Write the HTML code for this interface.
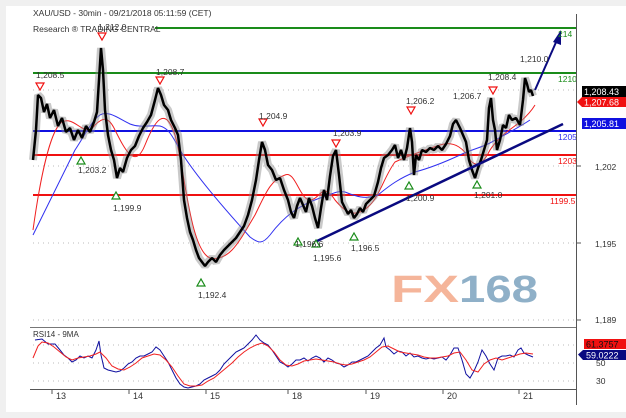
<!DOCTYPE html>
<html><head><meta charset="utf-8"><style>
html,body{margin:0;padding:0;background:#f0f0f0;}
svg{display:block;font-family:"Liberation Sans",sans-serif;}
</style></head><body>
<svg width="626" height="418" viewBox="0 0 626 418" xmlns="http://www.w3.org/2000/svg">
<rect x="6" y="6" width="620" height="406" fill="#fff"/>
<g stroke="#bbb" stroke-dasharray="1,4" stroke-width="1">
<line x1="33" y1="90" x2="576" y2="90"/><line x1="33" y1="166" x2="576" y2="166"/>
<line x1="33" y1="243" x2="576" y2="243"/><line x1="33" y1="320" x2="576" y2="320"/>
<line x1="33" y1="345" x2="576" y2="345"/><line x1="33" y1="363" x2="576" y2="363"/><line x1="33" y1="381" x2="576" y2="381"/>
</g>
<text x="391" y="302" font-size="38" font-weight="bold" fill="#f5b59a" textLength="68" lengthAdjust="spacingAndGlyphs">FX</text>
<text x="459" y="302" font-size="38" font-weight="bold" fill="#8fb0c8" textLength="79" lengthAdjust="spacingAndGlyphs">168</text>
<line x1="155" y1="28" x2="576" y2="28" stroke="#1a8c1a" stroke-width="2"/>
<line x1="33" y1="73" x2="576" y2="73" stroke="#1a8c1a" stroke-width="2"/>
<line x1="33" y1="131" x2="576" y2="131" stroke="#1010e0" stroke-width="2"/>
<line x1="33" y1="155" x2="576" y2="155" stroke="#f01010" stroke-width="2"/>
<line x1="33" y1="195" x2="576" y2="195" stroke="#f01010" stroke-width="2"/>
<path d="M33,230 C40,180 50,130 62,122 C75,115 85,140 95,125 C102,118 108,115 115,130 C125,150 135,170 145,145 C155,120 165,105 175,135 C185,170 190,250 210,258 C230,262 240,240 255,215 C265,195 270,180 285,175 C295,170 300,200 310,200 C320,200 322,180 335,200 C345,212 355,220 370,205 C380,195 385,175 395,162 C410,155 425,150 440,145 C455,140 465,150 470,160 C478,170 485,160 490,150 C500,135 510,130 520,122 C528,115 532,110 535,105" fill="none" stroke="#f02020" stroke-width="1"/>
<path d="M33,235 C50,200 65,170 75,150 C85,135 92,120 100,115 C108,110 118,118 130,124 C140,128 150,125 160,126 C168,128 172,135 180,150 C195,175 230,215 250,237 C258,243 262,245 270,235 C285,215 300,205 320,198 C330,196 335,190 345,192 C355,196 365,200 378,195 C390,185 400,178 415,172 C430,168 445,162 460,155 C470,150 480,148 490,143 C500,137 515,130 530,120" fill="none" stroke="#3030f0" stroke-width="1"/>
<g fill="none" stroke-linejoin="bevel">
<polyline id="p" stroke="#888" stroke-width="8" stroke-opacity="0.45" points="33,160 36,130 38,95 41,98 44,112 47,104 50,118 54,110 58,126 62,118 66,132 70,128 74,140 78,130 82,138 86,126 90,132 94,122 97,112 99,80 101,48 103,70 105,110 108,135 111,150 114,160 117,178 120,168 123,172 127,158 131,150 135,146 139,136 143,128 147,122 151,115 155,100 158,88 161,95 164,105 168,110 171,120 175,128 178,135 181,160 184,200 187,218 190,232 193,240 196,250 199,258 202,262 205,266 208,262 212,258 216,262 220,255 224,250 228,246 232,242 236,238 240,232 244,226 248,215 252,200 256,180 259,160 262,142 265,150 268,165 272,170 276,180 280,178 284,190 288,200 291,212 294,218 297,206 300,198 303,205 306,212 309,198 312,206 315,218 318,228 321,208 324,190 327,200 330,176 333,156 336,150 339,175 342,202 345,208 348,214 351,210 354,218 357,214 360,208 363,212 366,204 370,200 374,196 378,182 381,168 384,158 388,155 392,150 395,145 398,158 401,150 404,160 407,148 410,128 412,142 414,175 416,155 419,160 422,150 426,152 430,148 434,150 438,146 442,150 446,144 450,136 453,124 456,120 460,128 463,135 466,142 469,160 472,170 475,178 478,168 481,160 484,150 487,140 489,108 491,98 493,120 495,130 497,150 500,140 503,125 506,128 509,115 512,120 516,118 520,125 523,100 525,78 527,84 529,92 531,90 533,96"/>
<polyline stroke="#000" stroke-width="2.5" points="33,160 36,130 38,95 41,98 44,112 47,104 50,118 54,110 58,126 62,118 66,132 70,128 74,140 78,130 82,138 86,126 90,132 94,122 97,112 99,80 101,48 103,70 105,110 108,135 111,150 114,160 117,178 120,168 123,172 127,158 131,150 135,146 139,136 143,128 147,122 151,115 155,100 158,88 161,95 164,105 168,110 171,120 175,128 178,135 181,160 184,200 187,218 190,232 193,240 196,250 199,258 202,262 205,266 208,262 212,258 216,262 220,255 224,250 228,246 232,242 236,238 240,232 244,226 248,215 252,200 256,180 259,160 262,142 265,150 268,165 272,170 276,180 280,178 284,190 288,200 291,212 294,218 297,206 300,198 303,205 306,212 309,198 312,206 315,218 318,228 321,208 324,190 327,200 330,176 333,156 336,150 339,175 342,202 345,208 348,214 351,210 354,218 357,214 360,208 363,212 366,204 370,200 374,196 378,182 381,168 384,158 388,155 392,150 395,145 398,158 401,150 404,160 407,148 410,128 412,142 414,175 416,155 419,160 422,150 426,152 430,148 434,150 438,146 442,150 446,144 450,136 453,124 456,120 460,128 463,135 466,142 469,160 472,170 475,178 478,168 481,160 484,150 487,140 489,108 491,98 493,120 495,130 497,150 500,140 503,125 506,128 509,115 512,120 516,118 520,125 523,100 525,78 527,84 529,92 531,90 533,96"/>
</g>
<line x1="315" y1="242" x2="563" y2="124" stroke="#0a0a80" stroke-width="2.5"/>
<line x1="535" y1="90" x2="557" y2="40" stroke="#0a0a80" stroke-width="2"/>
<polygon points="561,30 553,42 561,45" fill="#0a0a80"/>
<g fill="#fff" stroke="#f01010" stroke-width="1.2">
<polygon points="36,83 44,83 40,90"/><polygon points="98,33 106,33 102,40"/><polygon points="156,77 164,77 160,84"/>
<polygon points="259,119 267,119 263,126"/><polygon points="332,140 340,140 336,147"/><polygon points="407,107 415,107 411,114"/>
<polygon points="489,87 497,87 493,94"/>
</g>
<g fill="#fff" stroke="#1a8c1a" stroke-width="1.2">
<polygon points="77,164 85,164 81,157"/><polygon points="112,199 120,199 116,192"/><polygon points="197,286 205,286 201,279"/>
<polygon points="294,245 302,245 298,238"/><polygon points="312,247 320,247 316,240"/><polygon points="350,240 358,240 354,233"/>
<polygon points="405,189 413,189 409,182"/><polygon points="473,188 481,188 477,181"/>
</g>
<g font-size="8.5" fill="#333">
<text x="36" y="78">1,208.5</text><text x="98" y="30">1,212.0</text><text x="156" y="75">1,208.7</text>
<text x="259" y="119">1,204.9</text><text x="333" y="136">1,203.9</text><text x="406" y="104">1,206.2</text>
<text x="453" y="99">1,206.7</text><text x="488" y="80">1,208.4</text><text x="520" y="62">1,210.0</text>
<text x="78" y="173">1,203.2</text><text x="113" y="211">1,199.9</text><text x="198" y="298">1,192.4</text>
<text x="295" y="247">1,196.6</text><text x="313" y="261">1,195.6</text><text x="351" y="251">1,196.5</text>
<text x="406" y="201">1,200.9</text><text x="474" y="198">1,201.0</text>
</g>
<text x="33" y="16" font-size="8.5" fill="#333">XAU/USD - 30min - 09/21/2018 05:11:59 (CET)</text>
<text x="33" y="32" font-size="8.5" fill="#333">Research ® TRADING CENTRAL</text>
<g font-size="8.5">
<text x="558" y="37" fill="#1a8c1a">214</text><text x="558" y="82" fill="#1a8c1a">1210</text>
<text x="558" y="140" fill="#3030f0">1205</text><text x="558" y="164" fill="#f01010">1203</text>
<text x="550" y="204" fill="#f01010">1199.5</text>
<text x="595" y="170" fill="#333">1,202</text><text x="595" y="247" fill="#333">1,195</text><text x="595" y="323" fill="#333">1,189</text>
</g>
<rect x="582" y="86" width="44" height="11" fill="#000"/><text x="584" y="95" font-size="9" fill="#fff">1,208.43</text>
<polygon points="577,102 582,97 626,97 626,107 582,107" fill="#f01010"/><text x="584" y="105.5" font-size="9" fill="#fff">1,207.68</text>
<rect x="582" y="118" width="44" height="11" fill="#1010e0"/><text x="584" y="127" font-size="9" fill="#fff">1,205.81</text>
<line x1="576.5" y1="14" x2="576.5" y2="405" stroke="#555" stroke-width="1"/>
<line x1="30" y1="327.5" x2="576" y2="327.5" stroke="#777" stroke-width="1"/>
<line x1="30" y1="389.5" x2="576" y2="389.5" stroke="#555" stroke-width="1"/>
<g stroke="#555"><line x1="577" y1="166" x2="581" y2="166"/><line x1="577" y1="243" x2="581" y2="243"/><line x1="577" y1="320" x2="581" y2="320"/>
<line x1="52" y1="389" x2="52" y2="394"/><line x1="129" y1="389" x2="129" y2="394"/><line x1="206" y1="389" x2="206" y2="394"/><line x1="288" y1="389" x2="288" y2="394"/><line x1="366" y1="389" x2="366" y2="394"/><line x1="443" y1="389" x2="443" y2="394"/><line x1="519" y1="389" x2="519" y2="394"/></g>
<g font-size="9" fill="#333">
<text x="56" y="399">13</text><text x="133" y="399">14</text><text x="210" y="399">15</text><text x="292" y="399">18</text><text x="370" y="399">19</text><text x="447" y="399">20</text><text x="523" y="399">21</text>
</g>
<text x="33" y="337" font-size="8" fill="#333">RSI14 - 9MA</text>
<polyline fill="none" stroke="#1010a0" stroke-width="1" points="35,340 42,339 48,344 55,344 60,350 64,355 68,358 72,362 76,360 80,356 84,358 88,356 92,358 96,350 99,341 101,355 104,368 108,370 112,371 116,372 120,371 124,368 128,364 132,362 136,358 140,356 144,356 148,354 152,352 156,347 160,350 164,356 168,362 172,370 176,378 180,384 184,387 188,388 192,387 196,386 200,384 204,380 208,378 212,376 216,374 220,370 224,364 228,360 232,356 236,352 240,350 244,348 248,344 252,340 256,335 260,340 264,343 268,345 272,350 276,356 280,362 284,364 288,367 292,364 296,360 300,360 304,358 308,361 312,358 316,356 320,358 324,362 328,358 332,360 336,363 340,364 344,367 348,365 352,362 356,362 360,360 364,358 368,356 372,352 376,348 380,345 384,338 386,347 390,350 394,354 398,351 402,352 406,356 410,353 414,357 418,356 422,358 426,359 430,358 434,359 438,358 442,357 446,360 450,355 454,348 458,348 462,360 466,374 470,378 474,371 478,362 482,350 486,356 490,364 494,370 498,358 502,356 506,356 510,355 514,357 518,350 521,348 524,353 528,355 533,357"/>
<polyline fill="none" stroke="#f02020" stroke-width="1" points="33,358 38,346 42,342 48,343 54,347 60,352 66,357 72,360 78,358 84,357 90,356 96,354 100,352 106,358 112,366 118,369 124,370 130,367 136,363 142,358 148,356 154,354 160,355 166,360 172,367 178,376 184,384 190,386 196,386 202,385 208,381 214,378 220,373 226,368 232,363 238,357 244,352 250,348 256,345 262,343 268,346 274,352 280,360 286,365 292,366 298,364 304,361 310,360 316,359 322,360 328,361 334,362 340,364 346,365 352,364 358,362 364,360 370,357 376,352 382,347 388,346 394,349 400,352 406,353 412,354 418,355 424,357 430,358 436,358 442,357 448,356 454,353 460,352 466,360 472,370 478,372 484,364 490,360 496,358 502,360 508,358 514,356 520,354 526,353 533,354"/>
<g font-size="8.5" fill="#333"><text x="596" y="366">50</text><text x="596" y="384">30</text></g>
<rect x="584" y="339" width="42" height="10" fill="#f01010"/><text x="586" y="347.5" font-size="9" fill="#111">61.3757</text>
<polygon points="578,354.5 583,350 626,350 626,360 583,360" fill="#0a0a80"/><text x="586" y="358.5" font-size="9" fill="#fff">59.0222</text>
</svg>
</body></html>
